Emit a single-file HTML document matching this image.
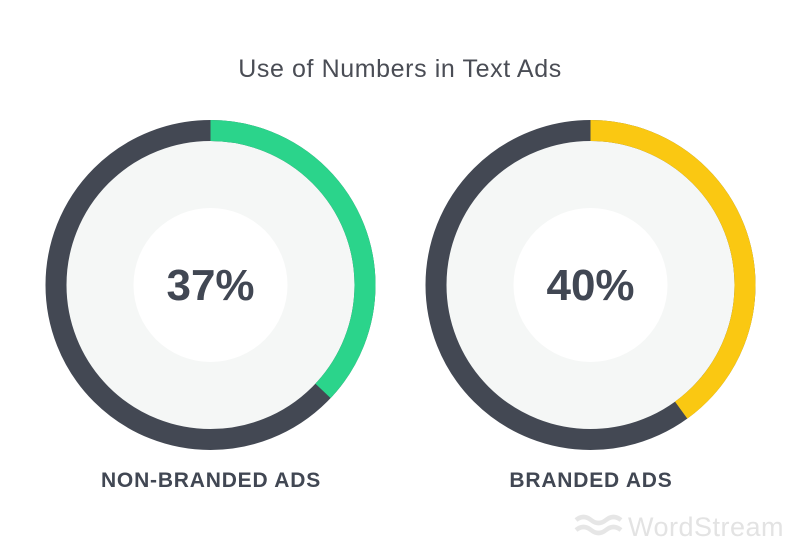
<!DOCTYPE html>
<html><head><style>
html,body{margin:0;padding:0;background:#fff;}
body{width:800px;height:547px;position:relative;overflow:hidden;font-family:"Liberation Sans",sans-serif;}
.t{position:absolute;left:0;width:800px;text-align:center;top:55px;font-size:25px;letter-spacing:0.6px;color:#4a4d55;}
.l{position:absolute;top:469px;font-size:21px;font-weight:bold;letter-spacing:0.8px;color:#414753;text-align:center;width:400px;}
</style></head><body>
<div class="t">Use of Numbers in Text Ads</div>
<svg width="800" height="547" style="position:absolute;left:0;top:0">
 <g transform="translate(210.5,285)">
  <circle r="155" fill="#f5f7f6"/>
  <circle r="77" fill="#fff"/>
  <circle r="154.5" fill="none" stroke="#434853" stroke-width="21"/>
  <circle r="154.5" fill="none" stroke="#2bd48b" stroke-width="21" stroke-dasharray="359.2 1000" transform="rotate(-90)"/>
  <text y="15" text-anchor="middle" font-family="Liberation Sans" font-weight="bold" font-size="44" fill="#414753">37%</text>
 </g>
 <g transform="translate(590.5,285)">
  <circle r="155" fill="#f5f7f6"/>
  <circle r="77" fill="#fff"/>
  <circle r="154.5" fill="none" stroke="#434853" stroke-width="21"/>
  <circle r="154.5" fill="none" stroke="#fac812" stroke-width="21" stroke-dasharray="388.3 1000" transform="rotate(-90)"/>
  <text y="15" text-anchor="middle" font-family="Liberation Sans" font-weight="bold" font-size="44" fill="#414753">40%</text>
 </g>
 <g fill="none" stroke="#e6e6e6" stroke-width="4.5">
  <path d="M576 520 q7.5 -6 15 0 t15 0 t15 0"/>
  <path d="M576 530 q7.5 -6 15 0 t15 0 t15 0"/>
 </g>
 <text x="628" y="536" font-family="Liberation Sans" font-size="27" letter-spacing="0.5" fill="#e3e3e3">WordStream</text>
</svg>
<div class="l" style="left:11px">NON-BRANDED ADS</div>
<div class="l" style="left:391px">BRANDED ADS</div>
</body></html>
